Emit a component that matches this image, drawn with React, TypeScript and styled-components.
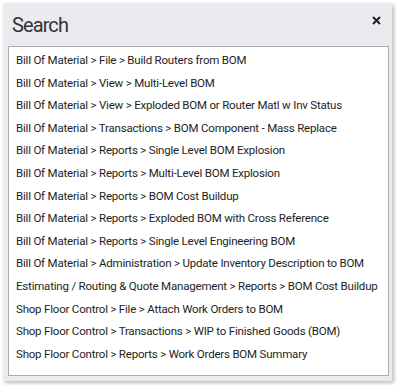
import { createGlobalStyle } from 'styled-components';
import styled from 'styled-components';

const GlobalStyle = createGlobalStyle`
	html, body {
		margin: 0;
		padding: 0;
		background: #ffffff;
	}
	body {
		font-family: Roboto, 'Open Sans', sans-serif;
	}
	* {
		box-sizing: border-box;
	}
`;

const results: string[] = [
	'Bill Of Material > File > Build Routers from BOM',
	'Bill Of Material > View > Multi-Level BOM',
	'Bill Of Material > View > Exploded BOM or Router Matl w Inv Status',
	'Bill Of Material > Transactions > BOM Component - Mass Replace',
	'Bill Of Material > Reports > Single Level BOM Explosion',
	'Bill Of Material > Reports > Multi-Level BOM Explosion',
	'Bill Of Material > Reports > BOM Cost Buildup',
	'Bill Of Material > Reports > Exploded BOM with Cross Reference',
	'Bill Of Material > Reports > Single Level Engineering BOM',
	'Bill Of Material > Administration > Update Inventory Description to BOM',
	'Estimating / Routing & Quote Management > Reports > BOM Cost Buildup',
	'Shop Floor Control > File > Attach Work Orders to BOM',
	'Shop Floor Control > Transactions > WIP to Finished Goods (BOM)',
	'Shop Floor Control > Reports > Work Orders BOM Summary',
];

const Page = styled.div`
	padding: 3px 6px 5px 3px;
`;

const Dialog = styled.div`
	width: 389px;
	height: 378px;
	background: #e9ebee;
	box-shadow: 2px 2px 4px rgba(0, 0, 0, 0.28);
	display: flex;
	flex-direction: column;
	padding: 0 3px 5px 5px;
`;

const TitleBar = styled.div`
	display: flex;
	align-items: center;
	justify-content: space-between;
	height: 43px;
	padding: 0 7px 0 4px;
`;

const Title = styled.h1`
	margin: 0;
	font-family: Roboto, sans-serif;
	font-size: 20px;
	font-weight: 400;
	color: #333333;
	letter-spacing: -0.9px;
`;

const CloseButton = styled.button`
	border: none;
	background: none;
	padding: 0;
	width: 12px;
	height: 12px;
	margin-top: -8px;
	display: flex;
	align-items: center;
	justify-content: center;
	cursor: pointer;
`;

const ResultList = styled.ul`
	flex: 1;
	min-width: 0;
	margin: 0;
	list-style: none;
	background: #ffffff;
	border: 1px solid #a9acb0;
	padding: 2px 0 0 7px;
	overflow: hidden;
`;

const ResultItem = styled.li`
	height: 22.6px;
	line-height: 22.6px;
	font-size: 11.5px;
	color: #1e1e1e;
	white-space: nowrap;
	letter-spacing: -0.2px;
`;

export default function App() {
	return (
		<>
			<GlobalStyle />
			<Page>
				<Dialog>
					<TitleBar>
						<Title>Search</Title>
						<CloseButton aria-label="Close">
							<svg width="9" height="9" viewBox="0 0 9 9">
								<path d="M1 1 L8 8 M8 1 L1 8" stroke="#222" strokeWidth="2" />
							</svg>
						</CloseButton>
					</TitleBar>
					<ResultList>
						{results.map((r) => (
							<ResultItem key={r}>{r}</ResultItem>
						))}
					</ResultList>
				</Dialog>
			</Page>
		</>
	);
}
